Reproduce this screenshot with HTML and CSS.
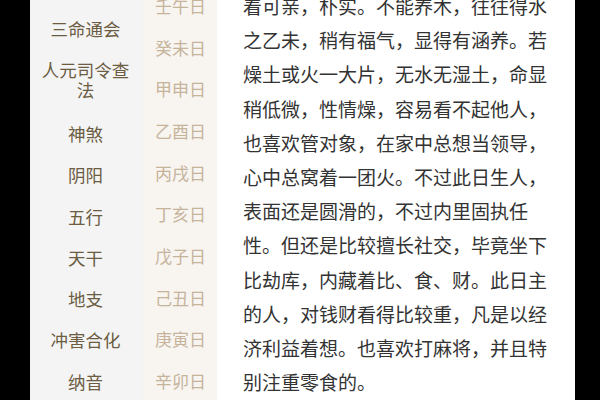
FILE: index.html
```html
<!DOCTYPE html>
<html lang="zh">
<head>
<meta charset="utf-8">
<title>日柱</title>
<link rel="stylesheet" href="styles.css">
</head>
<body>
<div class="page">
  <ul class="nav">
    <li>三命通会</li>
    <li class="two">人元司令查<br>法</li>
    <li>神煞</li>
    <li>阴阳</li>
    <li>五行</li>
    <li>天干</li>
    <li>地支</li>
    <li>冲害合化</li>
    <li>纳音</li>
  </ul>
  <ul class="days">
    <li>壬午日</li>
    <li>癸未日</li>
    <li>甲申日</li>
    <li>乙酉日</li>
    <li>丙戌日</li>
    <li>丁亥日</li>
    <li>戊子日</li>
    <li>己丑日</li>
    <li>庚寅日</li>
    <li>辛卯日</li>
  </ul>
  <div class="content">
    <p class="text">着可亲，朴实。不能养木，往往得水<br>之乙未，稍有福气，显得有涵养。若<br>燥土或火一大片，无水无湿土，命显<br>稍低微，性情燥，容易看不起他人，<br>也喜欢管对象，在家中总想当领导，<br>心中总窝着一团火。不过此日生人，<br>表面还是圆滑的，不过内里固执任<br>性。但还是比较擅长社交，毕竟坐下<br>比劫库，内藏着比、食、财。此日主<br>的人，对钱财看得比较重，凡是以经<br>济利益着想。也喜欢打麻将，并且特<br>别注重零食的。</p>
  </div>
</div>
</body>
</html>
```

FILE: styles.css
```css
html, body {
  margin: 0;
  padding: 0;
  background: #000;
  height: 400px;
  overflow: hidden;
}

.page {
  display: flex;
  margin-left: 30px;
  width: 545px;
  height: 400px;
  overflow: hidden;
  font-family: "Noto Sans CJK SC", "Noto Sans", sans-serif;
}

.nav, .days {
  list-style: none;
  margin: 0;
  padding: 0;
  display: flex;
  flex-direction: column;
  flex-shrink: 0;
}

.nav {
  width: 113px;
  background: #f4f4f4;
  color: #6b5c42;
  font-size: 17.5px;
  padding-top: 8px;
}

.nav li {
  height: 41.3px;
  line-height: 20px;
  display: flex;
  align-items: center;
  justify-content: center;
  text-align: center;
  flex-shrink: 0;
  padding-right: 2px;
}

.nav li.two {
  height: 62px;
  padding-bottom: 2px;
}

.days {
  width: 74px;
  background: #f8f5f1;
  color: #c6b39b;
  font-size: 17px;
  margin-top: -15px;
}

.days li {
  height: 41.7px;
  line-height: 20px;
  display: flex;
  align-items: center;
  justify-content: center;
  flex-shrink: 0;
  padding-left: 1px;
}

.content {
  flex: 1;
  background: #fff;
  padding-left: 26px;
}

.text {
  margin: -11px 0 0;
  font-size: 19px;
  line-height: 34.2px;
  color: #333;
  white-space: nowrap;
}
```
